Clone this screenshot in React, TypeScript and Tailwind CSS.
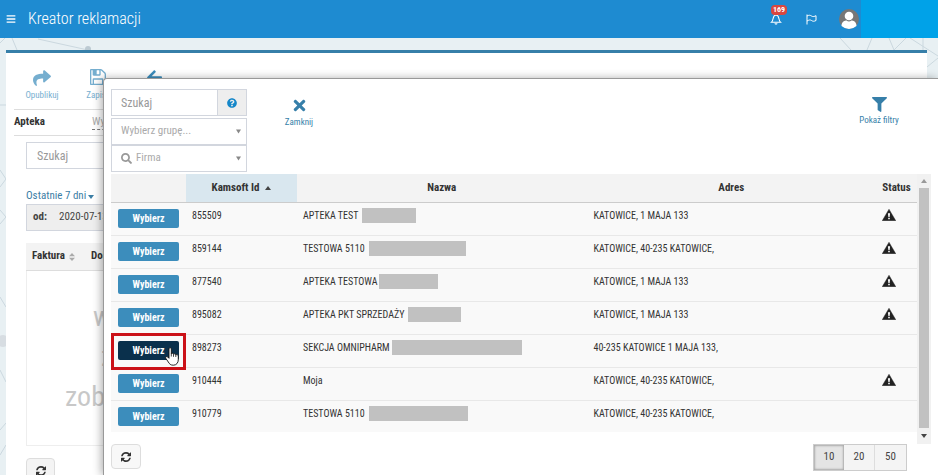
import type { ReactNode } from "react";
import { FaArrowLeft, FaBars, FaFilter, FaQuestionCircle, FaSearch, FaShare, FaTimes } from "react-icons/fa";

interface Pharmacy {
  id: string;
  name: string;
  mask: string;
  address: string;
  warning: boolean;
  active?: boolean;
}

const pharmacies: Pharmacy[] = [
  { id: "855509", name: "APTEKA TEST", mask: "ml-1 w-[54px]", address: "KATOWICE, 1 MAJA 133", warning: true },
  { id: "859144", name: "TESTOWA 5110", mask: "ml-1 w-[97px]", address: "KATOWICE, 40-235 KATOWICE,", warning: true },
  { id: "877540", name: "APTEKA TESTOWA", mask: "ml-0.5 w-[59px]", address: "KATOWICE, 1 MAJA 133", warning: true },
  { id: "895082", name: "APTEKA PKT SPRZEDAŻY", mask: "ml-1 w-[53px]", address: "KATOWICE, 1 MAJA 133", warning: true },
  { id: "898273", name: "SEKCJA OMNIPHARM", mask: "ml-0.5 w-[130px]", address: "40-235 KATOWICE 1 MAJA 133,", warning: false, active: true },
  { id: "910444", name: "Moja", mask: "", address: "KATOWICE, 40-235 KATOWICE,", warning: true },
  { id: "910779", name: "TESTOWA 5110", mask: "ml-1 w-[99px]", address: "KATOWICE, 40-235 KATOWICE,", warning: false },
];

function RefreshIcon() {
  return (
    <svg viewBox="0 0 1536 1536" className="size-[10px] fill-[#333]" aria-hidden="true">
      <path d="M1511 928q0 5-1 7-64 268-268 434.500t-478 166.500q-146 0-282.500-55t-243.500-157l-129 129q-19 19-45 19t-45-19-19-45v-448q0-26 19-45t45-19h448q26 0 45 19t19 45-19 45l-137 137q71 66 161 102t187 36q134 0 250-65t186-179q11-17 53-117 8-23 30-23h192q13 0 22.500 9.500t9.500 22.500zm25-800v448q0 26-19 45t-45 19h-448q-26 0-45-19t-19-45 19-45l138-138q-148-137-349-137-134 0-250 65t-186 179q-11 17-53 117-8 23-30 23h-199q-13 0-22.500-9.500t-9.500-22.500v-7q65-268 270-434.500t480-166.500q146 0 284 55.500t245 156.500l130-129q19-19 45-19t45 19 19 45z" />
    </svg>
  );
}

function SaveIcon() {
  return (
    <svg viewBox="0 128 1536 1536" className="size-4 fill-current" aria-hidden="true">
      <path d="M384 1536h768v-384h-768v384zm896 0h128v-896q0-14-10-38.500t-20-34.500l-281-281q-10-10-34-20t-39-10v416q0 40-28 68t-68 28h-576q-40 0-68-28t-28-68v-416h-128v1280h128v-416q0-40 28-68t68-28h832q40 0 68 28t28 68v416zm-384-928v-320q0-13-9.500-22.500t-22.500-9.500h-192q-13 0-22.500 9.500t-9.500 22.500v320q0 13 9.500 22.500t22.500 9.500h192q13 0 22.500-9.500t9.500-22.500zm640 32v928q0 40-28 68t-68 28h-1344q-40 0-68-28t-28-68v-1344q0-40 28-68t68-28h928q40 0 88 20t76 48l280 280q28 28 48 76t20 88z" />
    </svg>
  );
}

function WarningIcon() {
  return (
    <svg viewBox="0 0 14 12" className="inline-block h-3 w-3.5" role="img" aria-label="Ostrzeżenie">
      <path d="M7 0.2 13.8 11.8H0.2Z" fill="#222" stroke="#222" strokeWidth="0.4" strokeLinejoin="round" />
      <path d="M5.9 4.2h2.2L7.6 8H6.4ZM6.2 8.7h1.6v1.5H6.2Z" fill="#fff" />
    </svg>
  );
}

function HandCursor() {
  return (
    <svg viewBox="0 0 14 19" className="absolute top-3 left-[54px] z-20 h-[19px] w-3.5" aria-hidden="true">
      <path
        d="M4 1.8C4 .3 6.300.3 6.300 1.800V6.800C6.600 5.900 8.400 6 8.500 7.200 9 6.500 10.700 6.700 10.800 7.900 11.500 7.300 13.300 7.600 13.300 9V12.500C13.300 15.700 11.500 18.200 8.300 18.200 5.600 18.200 4.400 16.900 3.300 15L.8 11.300C.1 10 1.500 8.900 2.600 9.900L4 11.300Z"
        fill="#fff"
        stroke="#111"
        strokeWidth="0.9"
      />
      <path d="M6.300 6.500V9.500M8.500 7.200V9.800M10.800 7.900V10" stroke="#111" strokeWidth="0.8" />
    </svg>
  );
}

function Network() {
  return (
    <svg className="absolute inset-0 size-full" stroke="#cbd8df" fill="none" aria-hidden="true">
      <path d="M0 43 5 38M12 38 17 50M38 39 88 50M0 105H6M0 170 6 179 0 187M0 210 6 217 0 224M0 297 6 307M0 370 6 382M0 430 6 423M0 455 6 445" />
      <path d="M840 38 851 50M872 38 867 50M889 38 894 50 906 38M910 38 938 56M923 38V50M938 58 927 67" />
      <circle cx="88" cy="49" r="3" fill="#bccad2" stroke="none" />
      <circle cx="3" cy="341" r="6" fill="#d7dde2" stroke="none" />
    </svg>
  );
}

function SelectBox({ label, children }: { label: string; children?: ReactNode }) {
  return (
    <div className="relative flex h-[27px] items-center border border-[#d2d6de] bg-white">
      {children}
      <select
        aria-label={label}
        className={`h-full w-full appearance-none bg-transparent text-[11px] text-[#aaa] outline-none ${children ? "pl-1" : "pl-[9px]"}`}
      >
        <option>{label}</option>
      </select>
      <svg viewBox="0 0 6 5" className="pointer-events-none absolute top-2.5 right-[5px] h-[5px] w-[5px] fill-[#888]" aria-hidden="true">
        <path d="M0 0H6L3 5Z" />
      </svg>
    </div>
  );
}

function TopBar() {
  return (
    <header className="relative flex h-[38px] shrink-0 items-center bg-[#1e8bd1] text-white">
      <button className="ml-1.5 text-[10px]" aria-label="Menu">
        <FaBars />
      </button>
      <h1 className="ml-3 flex-1 text-[16px] leading-5 font-light">Kreator reklamacji</h1>
      <button className="relative mr-6 size-3" aria-label="Powiadomienia">
        <svg viewBox="0 0 12 12" className="size-3" fill="none" stroke="white" strokeWidth="1.1">
          <path d="M1.500 9.200C4 7 2.200 2 6 2S8 7 10.500 9.200ZM4.800 10.300Q6 11.800 7.200 10.300M6 .7V2" />
        </svg>
        <span className="absolute -top-2 left-px flex h-2.5 items-center rounded-sm bg-[#d9473f] px-0.5 text-[8px] font-bold">169</span>
      </button>
      <button className="mr-[22px]" aria-label="Zgłoszenia">
        <svg viewBox="0 0 11 11" className="size-[11px]" fill="none" stroke="white">
          <path d="M1 .5V10.500M1 2C3 1 4 1 5.500 2S8.500 2.500 10 1.700V6.500C8 7.500 7 7.500 5.500 6.500S3 6 1 7" />
        </svg>
      </button>
      <svg viewBox="0 0 20 20" className="size-5" role="img" aria-label="Użytkownik">
        <circle cx="10" cy="10" r="10" fill="#777" />
        <circle cx="10" cy="7" r="4.300" fill="#fff" />
        <path d="M2.500 17C2.500 12.500 6 11.500 7.500 11.500Q10 13.500 12.500 11.500C14 11.500 17.500 12.500 17.500 17Q14 20 10 20T2.500 17Z" fill="#fff" />
      </svg>
      <div className="ml-0.5 h-full w-[77px] bg-[#00a2e8]" />
    </header>
  );
}

function ComplaintPanel() {
  return (
    <main className="relative mt-3 mr-[11px] ml-1.5 flex-1 border-t-[3px] border-[#367fa9] bg-white">
      <div className="ml-2 flex h-[57px] border-b border-[#ddd] pt-4 text-[9px] text-[#3c8dbc]">
        <button className="flex w-14 flex-col items-center opacity-70">
          <FaShare className="text-[18px]" />
          <span className="leading-4">Opublikuj</span>
        </button>
        <button className="flex w-14 flex-col items-center opacity-70">
          <SaveIcon />
          <span className="mt-0.5 leading-4">Zapisz</span>
        </button>
        <button className="flex w-14 flex-col items-center" aria-label="Wróć">
          <FaArrowLeft className="text-[17px]" />
        </button>
      </div>
      <div className="ml-2 flex h-[26px] items-center border-b border-[#ddd] text-[11px]">
        <span className="w-[78px] font-bold text-[#333]">Apteka</span>
        <a href="#apteka" className="border-b border-dashed border-[#777] leading-[14px] text-[#aaa]">Wybierz</a>
      </div>
      <div className="ml-5 pt-1.5">
        <input aria-label="Szukaj faktury" placeholder="Szukaj" className="h-[27px] w-[160px] border border-[#d2d6de] px-2.5 text-[12px] placeholder:text-[#999]" />
        <button className="mt-5 flex h-[15px] items-center gap-0.5 text-[11px] text-[#3c7ea5]">
          Ostatnie 7 dni
          <svg viewBox="0 0 6 4" className="h-1 w-1.5 fill-current"><path d="M0 0H6L3 4Z" /></svg>
        </button>
        <div className="flex h-[27px] items-center border border-[#d2d6de] bg-[#eee] pl-1.5 text-[11px] text-[#444]">
          <b className="w-[26px]">od:</b>
          2020-07-13
        </div>
        <div className="mt-3 flex h-7 items-center border-b border-[#ddd] bg-[#f3f3f3] pl-1.5 text-[11px] font-bold text-[#333]">
          Faktura
          <svg viewBox="0 0 6 8" className="mr-4 ml-1 h-2 w-1.5 fill-[#aaa]"><path d="M0 3.300H6L3 0ZM0 4.700H6L3 8Z" /></svg>
          Dokument
        </div>
        <div className="h-[175px] border-b border-l border-[#eee] pt-[26px] text-[28px] leading-10 text-[#c8c8c8]">
          <p className="pl-[66px]">w</p>
          <p className="pl-[74px]">z</p>
          <p className="pl-[38px]">zob</p>
        </div>
        <button className="mt-3 flex h-[25px] w-[29px] items-center justify-center rounded-sm border border-[#ddd] bg-[#f4f4f4]" aria-label="Odśwież faktury">
          <RefreshIcon />
        </button>
      </div>
    </main>
  );
}

function PharmacyTable() {
  return (
    <div className="flex">
      <table className="w-full table-fixed border-collapse bg-[#f9f9f9] text-[10px] text-[#333]">
        <colgroup>
          <col className="w-[75px]" />
          <col className="w-[111px]" />
          <col />
          <col />
          <col className="w-[41px]" />
        </colgroup>
        <thead>
          <tr className="h-7 border-b border-[#ccc] bg-[#f3f3f3] text-[11px]">
            <th aria-label="Akcja" />
            <th className="bg-[#d9e7ef]">
              Kamsoft Id
              <svg viewBox="0 0 6 4" className="ml-1.5 inline h-1 w-1.5 fill-[#444]"><path d="M0 4H6L3 0Z" /></svg>
            </th>
            <th>Nazwa</th>
            <th>Adres</th>
            <th>Status</th>
          </tr>
        </thead>
        <tbody>
          {pharmacies.map((p) => (
            <tr key={p.id} className="h-[33px] border-b border-[#e8e8e8] align-top last:h-8 last:border-0">
              <td className="relative pt-1.5 pl-[7px]">
                <button className={`block h-[19px] w-[61px] rounded-[2px] font-bold text-white ${p.active ? "bg-[#0a304c]" : "bg-[#3c8dbc]"}`}>
                  Wybierz
                </button>
                {p.active && (
                  <>
                    <span className="absolute -top-0.5 left-0 z-10 h-[37px] w-[75px] border-[3px] border-[#cb1118]" />
                    <HandCursor />
                  </>
                )}
              </td>
              <td className="pt-[5px] pl-1.5 leading-4">{p.id}</td>
              <td className="pt-[5px] pl-1.5">
                <div className="flex h-4 items-center whitespace-nowrap">
                  {p.name}
                  {p.mask && <span className={`h-[15px] bg-[#c1c1c1] ${p.mask}`} />}
                </div>
              </td>
              <td className="pt-[5px] pl-[7px] leading-4">{p.address}</td>
              <td className="pt-1.5 pl-1.5 leading-3">{p.warning && <WarningIcon />}</td>
            </tr>
          ))}
        </tbody>
      </table>
      <div className="-mb-3 flex w-3.5 shrink-0 flex-col items-center bg-[#f1f1f1]" aria-hidden="true">
        <svg viewBox="0 0 6 4" className="my-[5px] h-1 w-1.5 fill-[#999]"><path d="M0 4H6L3 0Z" /></svg>
        <div className="w-2.5 flex-1 bg-[#c1c1c1]" />
        <svg viewBox="0 0 6 4" className="my-1.5 h-1 w-1.5 fill-[#444]"><path d="M0 0H6L3 4Z" /></svg>
      </div>
    </div>
  );
}

function PharmacyDialog() {
  return (
    <section role="dialog" aria-label="Wybór apteki" className="absolute top-[78px] right-0 bottom-0 left-[103px] rounded-tl border-t border-l border-[#999] bg-white px-[7px] pt-2.5 shadow-[-2px_0_8px_rgba(0,0,0,0.3)]">
      <div className="flex h-[85px] items-start">
        <div className="w-[136px]">
          <div className="mb-0.5 flex h-[27px] border border-[#d2d6de]">
            <input aria-label="Szukaj apteki" placeholder="Szukaj" className="min-w-0 flex-1 px-[9px] text-[12px] placeholder:text-[#999]" />
            <button className="flex w-[29px] items-center justify-center border-l border-[#d2d6de] bg-[#eee] text-[10px] text-[#1587c9]" aria-label="Pomoc">
              <FaQuestionCircle />
            </button>
          </div>
          <SelectBox label="Wybierz grupę..." />
          <SelectBox label="Firma">
            <FaSearch className="ml-[9px] shrink-0 text-[11px] text-[#999]" />
          </SelectBox>
        </div>
        <button className="mt-2 ml-8 flex w-10 flex-col items-center text-[9px] text-[#367fa9]">
          <FaTimes className="text-[17px]" />
          <span className="leading-4">Zamknij</span>
        </button>
        <button className="mt-2 mr-6 ml-auto flex w-14 flex-col items-center text-[9px] text-[#367fa9]">
          <FaFilter className="text-[15px]" />
          <span className="leading-4">Pokaż filtry</span>
        </button>
      </div>
      <PharmacyTable />
      <div className="mt-3 mr-6 flex justify-between text-[11px] text-[#444]">
        <button className="flex h-[25px] w-[30px] items-center justify-center rounded-sm border border-[#ddd] bg-[#f8f8f8]" aria-label="Odśwież">
          <RefreshIcon />
        </button>
        <div className="flex h-[27px] border border-[#ccc] bg-[#f4f4f4]">
          <button className="w-[30px] bg-[#e4e4e4] shadow-[inset_0_0_2px_1px_#aaa]">10</button>
          <button className="w-[31px] border-r border-[#ddd]">20</button>
          <button className="w-[31px]">50</button>
        </div>
      </div>
    </section>
  );
}

export default function App() {
  return (
    <div className="relative flex h-screen flex-col overflow-hidden bg-[#e8f0f3] font-['Roboto_Condensed','Roboto','Liberation_Sans_Narrow',sans-serif]">
      <Network />
      <TopBar />
      <ComplaintPanel />
      <PharmacyDialog />
    </div>
  );
}
